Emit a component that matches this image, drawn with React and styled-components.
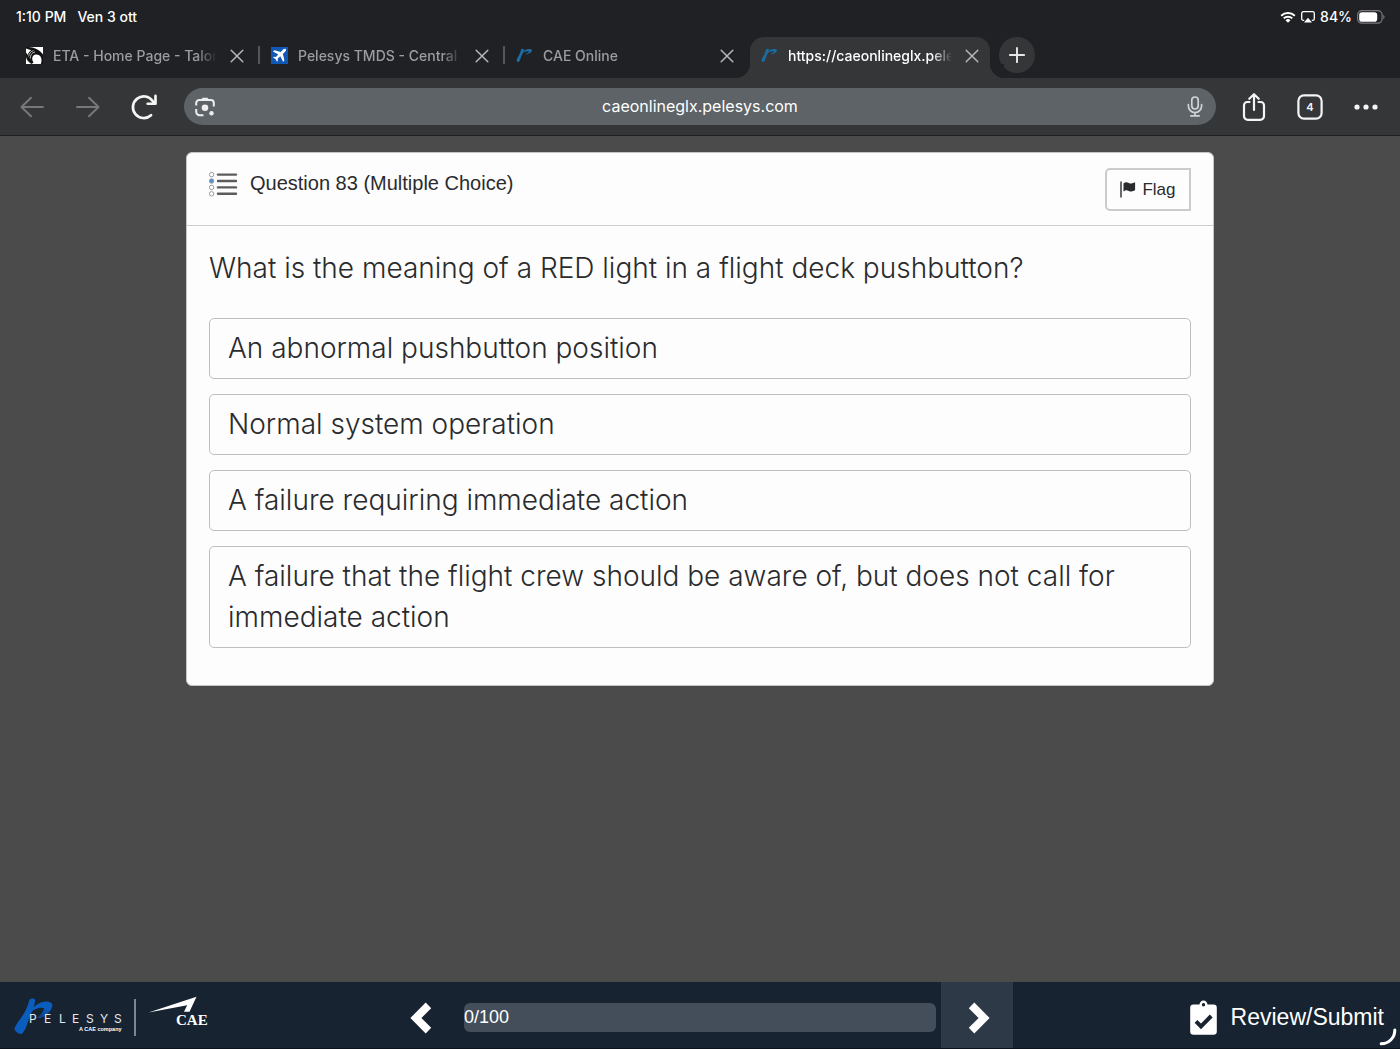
import React, { useState } from "react";
import styled, { createGlobalStyle } from "styled-components";

const ui = `Inter, "Liberation Sans", sans-serif`;
const body = `"Liberation Sans", Arial, sans-serif`;

const Global = createGlobalStyle`
  *, *::before, *::after { box-sizing: border-box; }
  body { margin: 0; background: #4b4b4b; font-family: ${body}; }
  button { border: 0; padding: 0; background: none; color: inherit; font: inherit; cursor: pointer; }
  svg { display: block; flex: none; }
`;

const Screen = styled.div`
  display: flex;
  flex-direction: column;
  min-height: 100vh;
`;

const Chrome = styled.header`
  background: #202124;
  color: #fff;
  font-family: ${ui};
`;

const StatusBar = styled.div`
  display: flex;
  justify-content: space-between;
  align-items: center;
  height: 33px;
  padding: 0 15px 0 16px;
  font-size: 14px;
  font-weight: 500;
`;

const StatusGroup = styled.div`
  display: flex;
  align-items: center;
  gap: ${(p) => p.$gap}px;
`;

const TabStrip = styled.nav`
  display: flex;
  align-items: flex-start;
  height: 45px;
  padding: 4px 15px 0;
`;

const Tab = styled.div`
  position: relative;
  display: flex;
  align-items: center;
  flex: 0 1 ${(p) => (p.$active ? 240 : 243)}px;
  min-width: 0;
  height: 41px;
  padding: 0 ${(p) => (p.$active ? 11 : 14)}px 4px 11px;
  border-radius: 14px 14px 0 0;
  background: ${(p) => (p.$active ? "#353638" : "transparent")};
  color: ${(p) => (p.$active ? "#fff" : "#9a9da1")};
  &::before, &::after {
    content: "";
    display: ${(p) => (p.$active ? "block" : "none")};
    position: absolute;
    bottom: 0;
    width: 14px;
    height: 14px;
  }
  &::before { left: -14px; background: radial-gradient(circle at 0 0, #202124 14px, #353638 14px); }
  &::after { right: -14px; background: radial-gradient(circle at 100% 0, #202124 14px, #353638 14px); }
`;

const TabLink = styled.a`
  display: flex;
  align-items: center;
  flex: 1;
  gap: 10px;
  min-width: 0;
  color: inherit;
  text-decoration: none;
`;

const TabTitle = styled.span`
  flex: 1;
  overflow: hidden;
  white-space: nowrap;
  font-size: 14px;
  font-weight: 500;
  line-height: 20px;
  mask-image: linear-gradient(to right, #000 calc(100% - 20px), transparent);
`;

const TabClose = styled.button`
  display: grid;
  place-items: center;
  width: 40px;
  height: 36px;
  margin-right: -13px;
  color: #b5b8bb;
`;

const TabDivider = styled.span`
  flex: none;
  width: 2px;
  height: 18px;
  margin-top: 9px;
  background: ${(p) => (p.$hidden ? "transparent" : "#52575c")};
`;

const NewTab = styled.button`
  display: grid;
  place-items: center;
  flex: none;
  width: 36px;
  height: 36px;
  margin-left: 9px;
  border-radius: 50%;
  background: #353638;
  color: #e4e5e7;
`;

const Toolbar = styled.div`
  display: flex;
  align-items: center;
  height: 58px;
  padding: 0 6px 0 4px;
  background: #353638;
  border-bottom: 1px solid #202124;
`;

const ToolButton = styled.button`
  display: grid;
  place-items: center;
  flex: none;
  width: 56px;
  height: 56px;
  color: ${(p) => (p.$dim ? "#76787a" : "#f5f5f5")};
`;

const AddressBar = styled.form`
  display: flex;
  align-items: center;
  flex: 1;
  min-width: 0;
  height: 37px;
  margin: 0 10px 0 12px;
  border-radius: 19px;
  background: #5d6367;
`;

const AddressInput = styled.input`
  flex: 1;
  min-width: 0;
  padding: 0 0 2px;
  border: 0;
  outline: 0;
  background: none;
  color: #fff;
  font-family: ${ui};
  font-size: 16px;
  text-align: center;
`;

const AddressButton = styled.button`
  display: grid;
  place-items: center;
  width: 42px;
  height: 37px;
  color: #eee;
`;

const Main = styled.main`
  flex: 1;
  padding: 16px;
`;

const Card = styled.section`
  max-width: 1028px;
  margin: 0 auto;
  border: 1px solid #c4c4c4;
  border-radius: 6px;
  background: #fdfdfd;
  color: #2a2b2d;
`;

const CardHeader = styled.div`
  display: flex;
  align-items: flex-start;
  justify-content: space-between;
  padding: 15px 22px 14px;
  border-bottom: 1px solid #d0d0d0;
`;

const CardTitle = styled.h1`
  display: flex;
  align-items: center;
  gap: 12px;
  margin: 0;
  font-size: 20px;
  font-weight: 400;
  line-height: 30px;
`;

const FlagButton = styled.button`
  display: flex;
  align-items: center;
  justify-content: center;
  gap: 6px;
  width: 86px;
  height: 43px;
  border: 2px solid #cbcbcb;
  border-radius: 5px 0 0 5px;
  font-size: 17px;
`;

const Question = styled.fieldset`
  min-width: 0;
  margin: 0;
  padding: 22px 22px 37px;
  border: 0;
  font-family: ${ui};
  font-size: 28px;
  font-weight: 300;
  line-height: 41px;
`;

const Prompt = styled.legend`
  float: left;
  width: 100%;
  margin-bottom: 29px;
  padding: 0;
`;

const Options = styled.div`
  clear: both;
  display: flex;
  flex-direction: column;
  gap: 15px;
`;

const Option = styled.label`
  display: flex;
  padding: 9px 18px;
  border: 1px solid #bfbfbf;
  border-radius: 5px;
  background: ${(p) => (p.$selected ? "#dbe9f7" : "transparent")};
  cursor: pointer;
`;

const OptionRadio = styled.input`
  appearance: none;
  width: 0;
  height: 0;
  margin: 0;
`;

const Footer = styled.footer`
  position: relative;
  display: grid;
  grid-template-columns: 1fr minmax(0, 626px) 1fr;
  height: 67px;
  background: #172331;
  border-bottom: 1px solid #0b121b;
  color: #fff;
`;

const Brand = styled.a`
  display: flex;
  align-items: center;
  padding: 6px 0 0 12px;
`;

const Pager = styled.div`
  display: grid;
  grid-template-columns: 72px 1fr 72px;
  align-items: center;
  column-gap: 5px;
`;

const PageButton = styled.button`
  display: grid;
  place-items: center;
  height: 66px;
  padding: ${(p) => (p.$next ? "5px 0 0 4px" : "5px 4px 0 0")};
  background: ${(p) => (p.$next ? "#2d3947" : "transparent")};
`;

const Progress = styled.div`
  height: 29px;
  margin-top: 5px;
  border-radius: 6px;
  background: #434e5a;
  font-size: 18px;
  line-height: 29px;
`;

const Review = styled.button`
  display: flex;
  align-items: center;
  justify-self: end;
  gap: 14px;
  height: 66px;
  padding: 4px 16px 0 0;
  font-size: 23px;
`;

const Spinner = styled.svg`
  position: absolute;
  right: 3px;
  bottom: 2px;
`;

const Line = ({ size = 24, w = 2, children }) => (
  <svg width={size} height={size} viewBox="0 0 24 24" fill="none" stroke="currentColor" strokeWidth={w} strokeLinecap="round" strokeLinejoin="round">
    {children}
  </svg>
);

const CloseIcon = () => (
  <svg width="14" height="14" viewBox="0 0 14 14" stroke="currentColor" strokeWidth="1.5" strokeLinecap="round">
    <path d="M1.2 1.2 12.8 12.8M12.8 1.2 1.2 12.8" />
  </svg>
);

const TalonIcon = () => (
  <svg width="17" height="17" viewBox="0 0 17 17">
    <path fill="#fff" d="M0 0h17v17H0z" />
    <path fill="#111" d="M2.500 0C8 .4 13.500 2.400 17 7.500V17h-2.200c1.500-3.600.8-7.400-2-9-2-1-4.200-.7-5.600.8-1.500 1.700-1.300 4.400.3 6.700L5.500 17C2 15 .2 12.500 0 9.600V5.500L1.800 8C2.300 6 3.500 4.300 5.200 3.200L0 1.500V0z" />
    <path fill="none" stroke="#fff" strokeWidth=".7" d="M2.600 9.500c.5-3 2.200-5.200 4.800-5.800M4.200 11.500c-.1-3.300 1.800-6 4.800-6.500" />
  </svg>
);

const PlaneIcon = () => (
  <svg width="17" height="17" viewBox="0 0 17 17">
    <path fill="#1158b5" d="M0 0h17v17H0z" />
    <path fill="#fff" d="M14.800 2.200c-.8-.8-2-.3-2.700.4L9.800 4.900 3.300 3.300 2 4.500l5.300 2.900-2.500 2.600-1.900-.3-.9.900 2.500 1.500 1.500 2.600.9-.9-.3-2 2.700-2.500 2.800 5.400 1.300-1.300-1.500-6.500 2.300-2.300c.7-.7 1.300-1.700.6-2.400z" />
  </svg>
);

const PelesysIcon = () => (
  <svg width="17" height="17" viewBox="0 0 17 17" fill="#196fa5">
    <path d="M5 2.600c1-1 2.800-1 2.900-.1-.4 3-2 5.400-2.800 7.200-.6 1.600-1 3.800-2.300 5.300-.9.300-2.300-.6-2.200-1.800C.9 11.500 2.500 9.500 3.400 7.500 4.200 5.800 4.700 4.200 5 2.600z" />
    <path d="M6.800 5C8.600 2.600 13.500 1.200 15.600 2.600c1.300 1.200-.9 4-4.600 4.700-.5 0-1.400 0-1.600-.2 1.700-.5 3.500-1.600 3.600-2.500-1.700-.9-5 .1-6.800 1.700z" />
  </svg>
);

const WifiIcon = () => (
  <svg width="16" height="12" viewBox="0 0 16 12" fill="none" stroke="#fff" strokeWidth="2">
    <path d="M1.200 4.700a9.800 9.800 0 0 1 13.600 0M3.700 7.400a6.200 6.200 0 0 1 8.600 0" />
    <path fill="#fff" stroke="none" d="M8 11.800 5.500 9.300a3.600 3.600 0 0 1 5 0z" />
  </svg>
);

const AirplayIcon = () => (
  <svg width="14" height="12" viewBox="0 0 14 12">
    <path fill="none" stroke="#fff" strokeWidth="1.300" d="M3.200 9.400H2.400A1.700 1.700 0 0 1 .7 7.700V2.400C.7 1.400 1.500.7 2.400.7h9.200c1 0 1.700.7 1.700 1.700v5.300c0 1-.7 1.700-1.700 1.700h-.8" />
    <path fill="#fff" d="m7 6.800 4 4.800H3z" />
  </svg>
);

const BatteryIcon = () => (
  <svg width="28" height="14" viewBox="0 0 28 14">
    <rect x=".6" y=".6" width="24.500" height="12.600" rx="4.200" fill="none" stroke="#77797c" strokeWidth="1.200" />
    <rect x="2.200" y="2.200" width="18" height="9.500" rx="2.800" fill="#fff" />
    <path fill="#77797c" d="M26.300 4.800c1.600.6 1.600 3.800 0 4.400z" />
  </svg>
);

const LensIcon = () => (
  <svg width="20" height="20" viewBox="0 0 20 20" fill="none" stroke="currentColor" strokeWidth="2">
    <path d="M1.200 8.500V6a3 3 0 0 1 3-3h11.600a3 3 0 0 1 3 3v3.500M1.200 12v2.800a3.500 3.500 0 0 0 3.500 3.500H8.500" />
    <path fill="currentColor" stroke="none" d="M5.500 3.500 7.500.8h5l2 2.700z" />
    <circle cx="10" cy="10.800" r="3.300" fill="currentColor" stroke="none" />
    <circle cx="16.500" cy="16.200" r="2.200" fill="currentColor" stroke="none" />
  </svg>
);

const MicIcon = () => (
  <svg width="16" height="21" viewBox="0 0 16 21" fill="none" stroke="#d0d3d5" strokeWidth="1.700" strokeLinecap="round">
    <rect x="4.800" y="1" width="6.400" height="12" rx="3.200" />
    <path d="M1.400 8.500v1.500a6.600 6.600 0 0 0 13.200 0V8.500M8 16.800v2.700M3.800 19.800h8.400" />
  </svg>
);

const ListIcon = () => (
  <svg width="29" height="30" viewBox="0 0 29 30">
    {[6.6, 13, 19.4, 25.8].map((y, i) => (
      <g key={y}>
        <circle cx="2.600" cy={y} r="2.200" fill={i === 1 ? "#4b93d6" : "#fff"} stroke="#999" strokeWidth="1" />
        <path stroke="#5c5c5c" strokeWidth="2.400" strokeLinecap="round" d={`M9 ${y}H27`} />
      </g>
    ))}
  </svg>
);

const FlagIcon = () => (
  <svg width="16" height="17" viewBox="0 0 16 17" fill="#2a2b2d">
    <path d="M.3.500h1.400v16H.3zM3.500 2.400c2-1.600 3.600-1.300 5.300-.5 1.900.9 3.800.7 6.300-.6v8c-2.300 1.300-4.300 1.400-6.300.6-1.900-.8-3.300-.8-5.300.7z" />
  </svg>
);

const Chevron = ({ flip }) => (
  <svg width="22" height="32" viewBox="0 0 22 32" fill="#fff">
    <path d={flip ? "M.8 6.200 6.300.6 21.600 16 6.300 31.400.8 25.800 10.600 16z" : "M21.200 6.200 15.700.6.400 16l15.300 15.400 5.500-5.600L11.400 16z"} />
  </svg>
);

const ClipboardIcon = () => (
  <svg width="27" height="35" viewBox="0 0 27 35">
    <path fill="#fff" fillRule="evenodd" d="M3.500 4.600h6C9.700 2.200 11.300.4 13.500.4s3.800 1.800 4 4.200h6A3.300 3.300 0 0 1 26.800 8v23.500a3.300 3.300 0 0 1-3.300 3.300h-20A3.300 3.300 0 0 1 .2 31.500V8a3.300 3.300 0 0 1 3.300-3.400zM13.500 3a1.700 1.700 0 1 0 0 3.400 1.700 1.700 0 0 0 0-3.400z" />
    <path fill="none" stroke="#172331" strokeWidth="4" d="m6 21.300 5 5L21.200 16" />
  </svg>
);

const BrandLogo = () => (
  <svg width="200" height="46" viewBox="0 0 200 46">
    <defs>
      <linearGradient id="swoosh" x1="0" y1="1" x2="1" y2="0">
        <stop offset="0" stopColor="#0d3b78" />
        <stop offset="1" stopColor="#0b62c4" />
      </linearGradient>
    </defs>
    <path fill="#0a5cbd" d="M17.500 4.500c2-1.700 5.300-1.300 5.800.6-1 8.400-5.200 15-7.200 21.500-1.500 5-3.200 9.300-6.100 12.200-2.500 1-7.500-2.200-7.600-5.200C4.800 27.500 9.500 23 12.500 17.500c2.300-4.300 4-8.400 5-13z" />
    <path fill="#0a5cbd" d="M20 14c4.500-5.700 13.600-9.300 19-6.300 2.300 1.300 1.600 5-1.200 8.600-3 3.800-7.300 6.700-12.300 6.800 3.500-3 6.200-6.300 6.800-9.600-3.500-2-9.800.5-12.300 3z" />
    <path fill="url(#swoosh)" d="M32.300 13c3 0 5.500 1.200 5.500 2.800-3 3.800-7.300 6.700-12.300 6.800 3.500-3 6.200-6.300 6.800-9.600z" />
    <text x="17 32 47 60 74 88 102" y="28" fill="#e6e9ee" fontFamily={ui} fontSize="12">PELESYS</text>
    <text x="67" y="36" fill="#fff" fontFamily={body} fontWeight="700" fontSize="5.5">A CAE company</text>
    <path stroke="#a0a7b0" strokeWidth="1.500" d="M123 4v37" />
    <path fill="#fff" d="M136.500 17.500 184.500 1.800 177.500 16.800h-5.500l3.200-6.600z" />
    <text x="164" y="30" fill="#fff" fontFamily={`"Liberation Serif", serif`} fontWeight="700" fontSize="15">CAE</text>
  </svg>
);

const tabs = [
  { title: "ETA - Home Page - Talon", icon: <TalonIcon /> },
  { title: "Pelesys TMDS - Central", icon: <PlaneIcon /> },
  { title: "CAE Online", icon: <PelesysIcon /> },
  { title: "https://caeonlineglx.pelesys.com", icon: <PelesysIcon />, active: true },
];

const answers = [
  "An abnormal pushbutton position",
  "Normal system operation",
  "A failure requiring immediate action",
  "A failure that the flight crew should be aware of, but does not call for immediate action",
];

export default function App() {
  const [selected, setSelected] = useState(null);
  return (
    <Screen>
      <Global />
      <Chrome>
        <StatusBar>
          <StatusGroup $gap={11}>
            <span>1:10 PM</span>
            <span>Ven 3 ott</span>
          </StatusGroup>
          <StatusGroup $gap={5}>
            <WifiIcon />
            <AirplayIcon />
            <span>84%</span>
            <BatteryIcon />
          </StatusGroup>
        </StatusBar>
        <TabStrip aria-label="Tabs">
          {tabs.map((t, i) => (
            <React.Fragment key={t.title}>
              <Tab $active={t.active}>
                <TabLink href="#">
                  {t.icon}
                  <TabTitle>{t.title}</TabTitle>
                </TabLink>
                <TabClose aria-label={`Close ${t.title}`}><CloseIcon /></TabClose>
              </Tab>
              {i < 3 && <TabDivider $hidden={i === 2} />}
            </React.Fragment>
          ))}
          <NewTab aria-label="New tab">
            <Line size={18} w={2.6}><path d="M12 2.500v19M2.500 12h19" /></Line>
          </NewTab>
        </TabStrip>
        <Toolbar>
          <ToolButton $dim aria-label="Back"><Line><path d="M23 12H1.500M11 2.800 1.500 12 11 21.200" /></Line></ToolButton>
          <ToolButton $dim aria-label="Forward"><Line><path d="M1 12h21.500M13 2.800 22.500 12 13 21.200" /></Line></ToolButton>
          <ToolButton aria-label="Reload">
            <Line size={26} w={2.500}><path d="M18.500 19.600A10 10 0 1 1 20 6.500l2 2.300M22.600 1.800v7.200h-7.200" /></Line>
          </ToolButton>
          <AddressBar>
            <AddressButton type="button" aria-label="Search with camera"><LensIcon /></AddressButton>
            <AddressInput aria-label="Address" defaultValue="caeonlineglx.pelesys.com" />
            <AddressButton type="button" aria-label="Voice search"><MicIcon /></AddressButton>
          </AddressBar>
          <ToolButton aria-label="Share">
            <svg width="24" height="28" viewBox="0 0 24 28" fill="none" stroke="currentColor" strokeWidth="2.200" strokeLinecap="round" strokeLinejoin="round">
              <path d="M7.500 9H5.300A3.300 3.300 0 0 0 2 12.300V23A3.800 3.800 0 0 0 5.800 26.800h12.400A3.800 3.800 0 0 0 22 23V12.300A3.300 3.300 0 0 0 18.700 9H16.500M12 17V1.500M7.300 5.800 12 1.200l4.700 4.600" />
            </svg>
          </ToolButton>
          <ToolButton aria-label="4 open tabs">
            <svg width="26" height="26" viewBox="0 0 26 26">
              <rect x="1.400" y="1.400" width="23.200" height="23.200" rx="5.500" fill="none" stroke="currentColor" strokeWidth="2.200" />
              <text x="13" y="17" textAnchor="middle" fill="currentColor" fontFamily={ui} fontWeight="600" fontSize="11">4</text>
            </svg>
          </ToolButton>
          <ToolButton aria-label="Menu">
            <svg width="24" height="6" viewBox="0 0 24 6" fill="currentColor">
              <circle cx="3" cy="3" r="2.600" /><circle cx="12" cy="3" r="2.600" /><circle cx="21" cy="3" r="2.600" />
            </svg>
          </ToolButton>
        </Toolbar>
      </Chrome>

      <Main>
        <Card>
          <CardHeader>
            <CardTitle><ListIcon />Question 83 (Multiple Choice)</CardTitle>
            <FlagButton><FlagIcon />Flag</FlagButton>
          </CardHeader>
          <Question>
            <Prompt>What is the meaning of a RED light in a flight deck pushbutton?</Prompt>
            <Options>
              {answers.map((a, i) => (
                <Option key={a} $selected={selected === i}>
                  <OptionRadio type="radio" name="answer" checked={selected === i} onChange={() => setSelected(i)} />
                  {a}
                </Option>
              ))}
            </Options>
          </Question>
        </Card>
      </Main>

      <Footer>
        <Brand href="#" aria-label="Pelesys, a CAE company"><BrandLogo /></Brand>
        <Pager>
          <PageButton aria-label="Previous question"><Chevron /></PageButton>
          <Progress role="progressbar" aria-label="Progress" aria-valuenow={0} aria-valuemin={0} aria-valuemax={100}>0/100</Progress>
          <PageButton $next aria-label="Next question"><Chevron flip /></PageButton>
        </Pager>
        <Review><ClipboardIcon />Review/Submit</Review>
        <Spinner width="18" height="18" viewBox="0 0 18 18" fill="none" stroke="#fff" strokeWidth="3" strokeLinecap="round">
          <path d="M15.800 2A13.500 13.500 0 0 1 2.200 15.800" />
        </Spinner>
      </Footer>
    </Screen>
  );
}
